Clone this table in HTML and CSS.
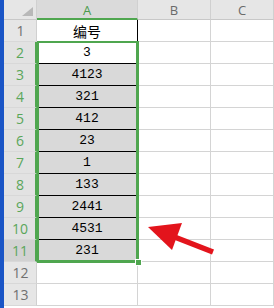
FILE: index.html
```html
<!DOCTYPE html>
<html>
<head>
<meta charset="utf-8">
<link rel="stylesheet" href="styles.css">
</head>
<body>
<div class="page">
  <div class="bluebar"></div>
  <div class="sheet">
    <div class="corner"><span class="tri"></span></div>
    <div class="colhead sel">A</div>
    <div class="colhead">B</div>
    <div class="colhead">C</div>

    <div class="rowhead">1</div>
    <div class="cell a head">编号</div><div class="cell"></div><div class="cell"></div>

    <div class="rowhead sel">2</div>
    <div class="cell a white">3</div><div class="cell"></div><div class="cell"></div>

    <div class="rowhead sel">3</div>
    <div class="cell a gray">4123</div><div class="cell"></div><div class="cell"></div>

    <div class="rowhead sel">4</div>
    <div class="cell a gray">321</div><div class="cell"></div><div class="cell"></div>

    <div class="rowhead sel">5</div>
    <div class="cell a gray">412</div><div class="cell"></div><div class="cell"></div>

    <div class="rowhead sel">6</div>
    <div class="cell a gray">23</div><div class="cell"></div><div class="cell"></div>

    <div class="rowhead sel">7</div>
    <div class="cell a gray">1</div><div class="cell"></div><div class="cell"></div>

    <div class="rowhead sel">8</div>
    <div class="cell a gray">133</div><div class="cell"></div><div class="cell"></div>

    <div class="rowhead sel">9</div>
    <div class="cell a gray">2441</div><div class="cell"></div><div class="cell"></div>

    <div class="rowhead sel">10</div>
    <div class="cell a gray">4531</div><div class="cell"></div><div class="cell"></div>

    <div class="rowhead sel dark">11</div>
    <div class="cell a gray">231</div><div class="cell"></div><div class="cell"></div>

    <div class="rowhead">12</div>
    <div class="cell"></div><div class="cell"></div><div class="cell"></div>

    <div class="rowhead">13</div>
    <div class="cell"></div><div class="cell"></div><div class="cell"></div>

    <div class="selection"><span class="handle"></span></div>
  </div>
  <svg class="arrow" width="274" height="308" viewBox="0 0 274 308">
    <line x1="213" y1="252" x2="172" y2="236" stroke="#e3141c" stroke-width="5.5"/>
    <polygon points="148,227 182,223 172,250" fill="#e3141c"/>
  </svg>
</div>
</body>
</html>
```
FILE: styles.css
```css
* { box-sizing: border-box; }
html, body { margin: 0; padding: 0; background: #ffffff; }
.page {
  position: relative;
  display: flex;
  width: 274px;
  height: 308px;
  overflow: hidden;
}
.bluebar {
  width: 4px;
  flex: none;
  background: #1a55c6;
}
.sheet {
  flex: 1;
  position: relative;
  display: grid;
  grid-template-columns: 33px 101px 73px 1fr;
  grid-template-rows: 20px repeat(13, 22px);
}
.corner {
  background: #e6e6e6;
  border-right: 1px solid #d0d0d0;
  border-bottom: 1px solid #c8c8c8;
  position: relative;
}
.tri {
  position: absolute;
  right: 3px;
  bottom: 3px;
  width: 0;
  height: 0;
  border-left: 11px solid transparent;
  border-bottom: 9px solid #b8b8b8;
}
.colhead {
  background: #e6e6e6;
  border-right: 1px solid #d0d0d0;
  border-bottom: 1px solid #c8c8c8;
  display: flex;
  align-items: center;
  justify-content: center;
  font-family: "Open Sans", "Liberation Sans", sans-serif;
  font-size: 13px;
  color: #6a6a6a;
  padding-top: 1px;
}
.colhead.sel {
  background: #dadada;
  color: #4c9a4c;
  border-bottom: 2px solid #4fa64f;
}
.rowhead {
  background: #e6e6e6;
  border-right: 1px solid #d0d0d0;
  border-bottom: 1px solid #d8d8d8;
  display: flex;
  align-items: center;
  justify-content: center;
  font-family: "Open Sans", "Liberation Sans", sans-serif;
  font-size: 14px;
  color: #707070;
  padding-left: 1px;
}
.rowhead.sel {
  color: #5aa65a;
  border-right: 2px solid #4fa64f;
  background: #e2e2e2;
}
.rowhead.dark { background: #d2d2d2; }
.cell {
  border-right: 1px solid #d4d4d4;
  border-bottom: 1px solid #d4d4d4;
  display: flex;
  align-items: center;
  justify-content: center;
  font-family: "Liberation Mono", "DejaVu Sans Mono", monospace;
  font-size: 13px;
  color: #000000;
}
.cell.a {
  border-right: 1px solid #000000;
  border-bottom: 1px solid #000000;
}
.cell.head {
  font-family: "Noto Sans CJK SC", sans-serif;
  font-size: 14px;
}
.cell.gray { background: #d9d9d9; }
.cell.white { background: #ffffff; }
.selection {
  grid-column: 2 / 3;
  grid-row: 3 / 13;
  position: absolute;
  top: -1px;
  left: 0;
  right: -1px;
  bottom: -1px;
  border: 2px solid #4fa64f;
  border-right-width: 3px;
  border-bottom-width: 3px;
  pointer-events: none;
}
.handle {
  position: absolute;
  right: -6px;
  bottom: -6px;
  width: 7px;
  height: 7px;
  background: #4fa64f;
  border: 1px solid #ffffff;
}
.arrow {
  position: absolute;
  left: 0;
  top: 0;
}
```
